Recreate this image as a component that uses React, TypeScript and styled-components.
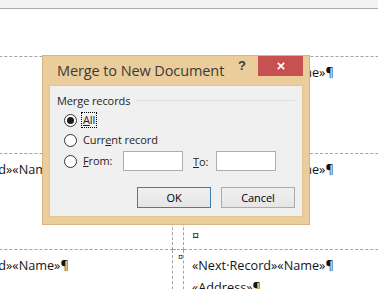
import React from "react";
import styled, { createGlobalStyle } from "styled-components";

const GlobalStyle = createGlobalStyle`
  html, body { margin: 0; padding: 0; background: #ffffff; }
  body { width: 378px; height: 289px; overflow: hidden; }
`;

const Screen = styled.div`
  position: relative;
  width: 378px;
  height: 289px;
  overflow: hidden;
  background: #ffffff;
  font-family: "Open Sans", "Noto Sans", sans-serif;
`;

const TopBand = styled.div`
  height: 8px;
  background: #f3f3f3;
  border-bottom: 1px solid #ababab;
`;

const DocArea = styled.div`
  padding-top: 47px;
  margin-left: -81px;
`;

const LabelTable = styled.div`
  display: grid;
  grid-template-columns: 254px 11px 300px;
  width: max-content;
  border-top: 1px dashed #a3a3a3;
`;

const Cell = styled.div<{ $h: number; $spacer?: boolean }>`
  box-sizing: border-box;
  height: ${(p) => p.$h}px;
  border-bottom: 1px dashed #a3a3a3;
  border-right: 1px dashed #a3a3a3;
  padding: ${(p) => (p.$spacer ? "2px 0 0 5px" : "4px 0 0 8px")};
  overflow: hidden;
`;

const Para = styled.p`
  margin: 0;
  font-size: 12.7px;
  line-height: 22px;
  color: #141414;
  white-space: nowrap;
`;

const CellMark = styled.span`
  display: block;
  font-size: 9px;
  line-height: 10px;
  color: #141414;
`;

const Dialog = styled.div`
  position: absolute;
  left: 42px;
  top: 55px;
  width: 268px;
  box-sizing: border-box;
  border: 1px solid #d6b57f;
  background: #ebcd9b;
  display: flex;
  flex-direction: column;
`;

const TitleBar = styled.div`
  height: 29px;
  display: flex;
  align-items: flex-start;
  padding: 0 6px 0 14px;
`;

const Title = styled.div`
  flex: 1;
  align-self: center;
  font-size: 14.5px;
  line-height: 29px;
  color: #3a3a3a;
  letter-spacing: -0.1px;
  white-space: nowrap;
`;

const Help = styled.div`
  height: 20px;
  line-height: 20px;
  margin-right: 12px;
  font-family: "Liberation Sans", Arial, sans-serif;
  font-weight: bold;
  font-size: 13px;
  color: #3a3a3a;
`;

const CloseButton = styled.div`
  width: 45px;
  height: 20px;
  background: #c75050;
  display: flex;
  align-items: center;
  justify-content: center;
`;

const Panel = styled.div`
  margin: 0 6px 7px;
  border: 1px solid #e2c794;
  background: #f0f0f0;
  padding: 6px 7px 8px;
  display: flex;
  flex-direction: column;
  font-size: 11px;
  letter-spacing: -0.1px;
  color: #1e1e1e;
`;

const GroupHeader = styled.div`
  height: 16px;
  display: flex;
  align-items: center;
  white-space: nowrap;
`;

const GroupLine = styled.div`
  flex: 1;
  height: 1px;
  margin-left: 6px;
  background: #dcdcdc;
`;

const OptionRow = styled.div<{ $mt: number }>`
  height: 20px;
  margin: ${(p) => p.$mt}px 0 0 7px;
  display: flex;
  align-items: center;
  white-space: nowrap;
`;

const FromLabel = styled.div`
  width: 59px;
  display: flex;
  align-items: center;
`;

const RadioCircle = styled.span<{ $checked?: boolean }>`
  box-sizing: border-box;
  width: 13px;
  height: 13px;
  flex: none;
  border-radius: 50%;
  border: 1px solid #333333;
  background: #ffffff;
  display: flex;
  align-items: center;
  justify-content: center;
  &::after {
    content: "";
    display: ${(p) => (p.$checked ? "block" : "none")};
    width: 7px;
    height: 7px;
    border-radius: 50%;
    background: #1a1a1a;
  }
`;

const OptionText = styled.span<{ $focus?: boolean }>`
  margin-left: 5px;
  line-height: 14px;
  padding: 0 1px;
  outline: ${(p) => (p.$focus ? "1px dotted #000" : "none")};
  u {
    text-decoration-thickness: 1px;
    text-underline-offset: 1px;
  }
`;

const ToLabel = styled.span`
  margin-left: 10px;
  width: 23px;
  u {
    text-decoration-thickness: 1px;
    text-underline-offset: 1px;
  }
`;

const Field = styled.input`
  box-sizing: border-box;
  width: 60px;
  height: 20px;
  margin: 0;
  padding: 0 3px;
  border: 1px solid #abadb3;
  background: #ffffff;
  outline: none;
  font: inherit;
`;

const ButtonRow = styled.div`
  margin-top: 16px;
  display: flex;
  justify-content: flex-end;
  gap: 10px;
`;

const Button = styled.button<{ $primary?: boolean }>`
  box-sizing: border-box;
  width: 74px;
  height: 21px;
  padding: 0;
  border: 1px solid ${(p) => (p.$primary ? "#3c7fb1" : "#acacac")};
  background: linear-gradient(#f0f0f0, #e5e5e5);
  font-family: inherit;
  font-size: 11px;
  letter-spacing: -0.1px;
  color: #000000;
`;

const rowHeights = [97, 96, 60];

function LabelCell({ h, lines }: { h: number; lines: string[] }) {
  return (
    <Cell $h={h}>
      {lines.map((l, i) => (
        <Para key={i}>{l}</Para>
      ))}
    </Cell>
  );
}

const firstLabel = ["«Name»¶", "«Address»¶", "«City»¶", "¤"];
const labelLines = ["«Next·Record»«Name»¶", "«Address»¶", "«City»¶", "¤"];

export default function App() {
  return (
    <>
      <GlobalStyle />
      <Screen>
        <TopBand />
        <DocArea>
          <LabelTable>
            {rowHeights.map((h, r) => (
              <React.Fragment key={r}>
                <LabelCell h={h} lines={r === 0 ? firstLabel : labelLines} />
                <Cell $h={h} $spacer>
                  <CellMark>¤</CellMark>
                </Cell>
                <LabelCell h={h} lines={labelLines} />
              </React.Fragment>
            ))}
          </LabelTable>
        </DocArea>

        <Dialog>
          <TitleBar>
            <Title>Merge to New Document</Title>
            <Help>?</Help>
            <CloseButton>
              <svg width="8" height="8" viewBox="0 0 8 8">
                <path d="M0.8 0.8 L7.2 7.2 M7.2 0.8 L0.8 7.2" stroke="#ffffff" strokeWidth="1.7" />
              </svg>
            </CloseButton>
          </TitleBar>
          <Panel>
            <GroupHeader>
              Merge records
              <GroupLine />
            </GroupHeader>
            <OptionRow $mt={2}>
              <RadioCircle $checked />
              <OptionText $focus>
                <u>A</u>ll
              </OptionText>
            </OptionRow>
            <OptionRow $mt={0}>
              <RadioCircle />
              <OptionText>
                Curr<u>e</u>nt record
              </OptionText>
            </OptionRow>
            <OptionRow $mt={1}>
              <FromLabel>
                <RadioCircle />
                <OptionText>
                  <u>F</u>rom:
                </OptionText>
              </FromLabel>
              <Field readOnly value="" />
              <ToLabel>
                <u>T</u>o:
              </ToLabel>
              <Field readOnly value="" />
            </OptionRow>
            <ButtonRow>
              <Button $primary>OK</Button>
              <Button>Cancel</Button>
            </ButtonRow>
          </Panel>
        </Dialog>
      </Screen>
    </>
  );
}
